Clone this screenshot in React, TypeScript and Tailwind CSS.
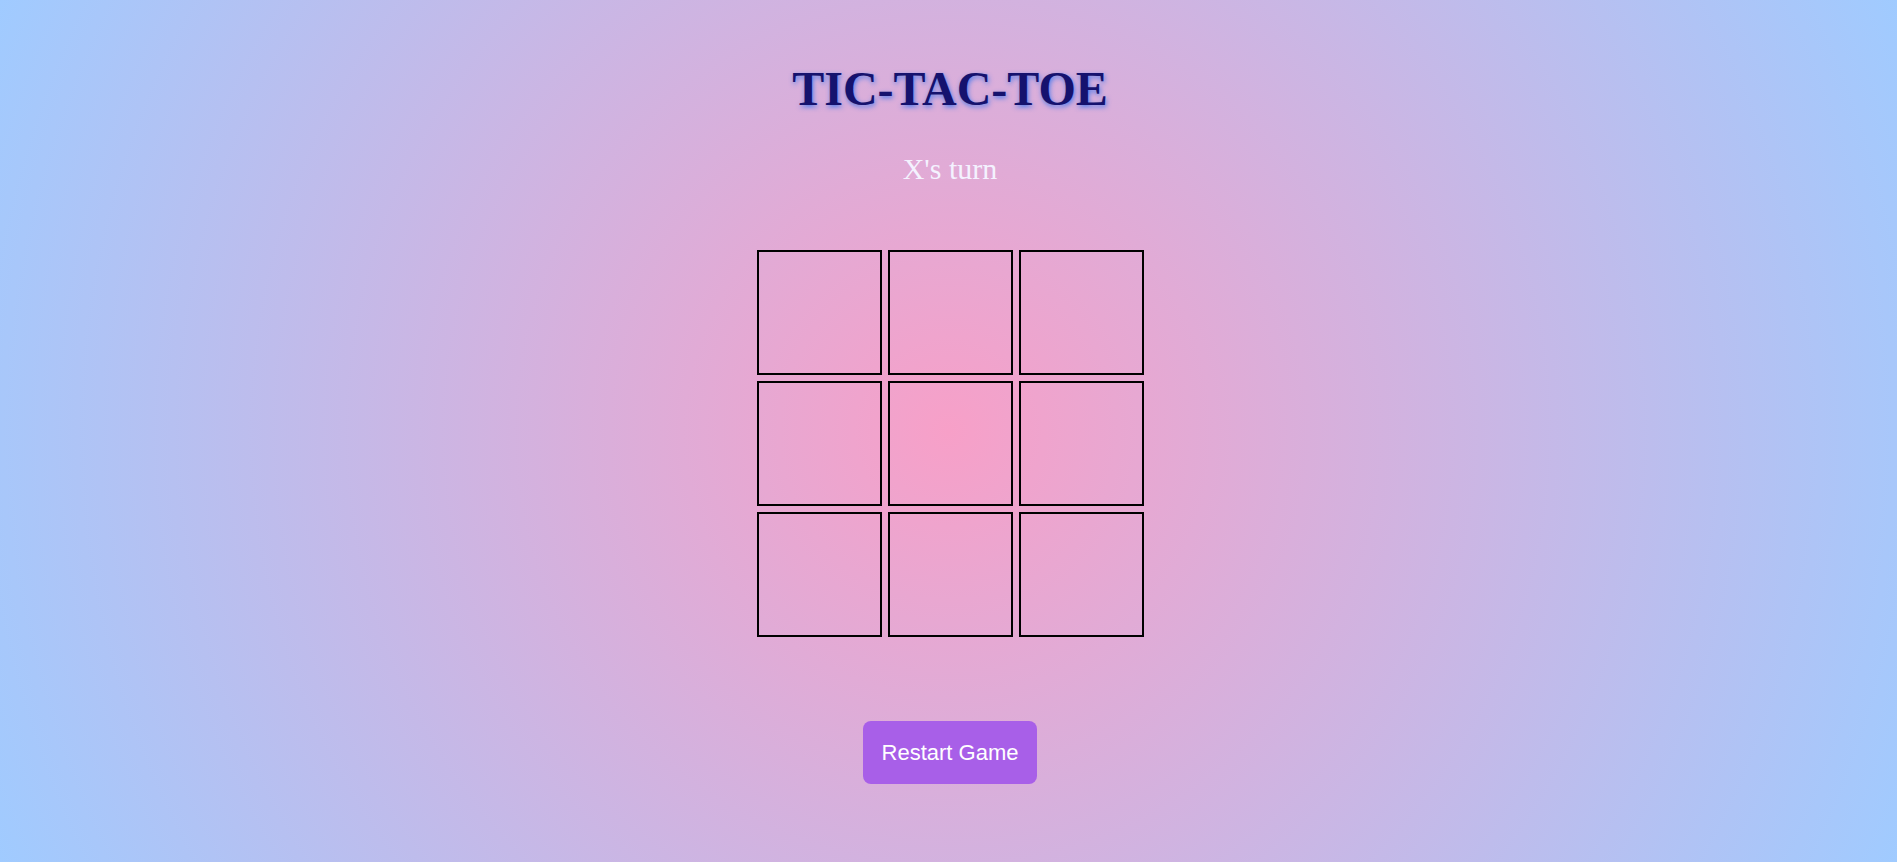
import React, { useState } from 'react';

type Cell = 'X' | 'O' | null;

const Square: React.FC<{ value: Cell; onClick: () => void }> = ({ value, onClick }) => (
  <button
    onClick={onClick}
    className="w-[125px] h-[125px] border-2 border-black bg-transparent flex items-center justify-center text-[64px] leading-none text-[#15126e] font-['Liberation_Serif',serif]"
  >
    {value}
  </button>
);

const App: React.FC = () => {
  const [board, setBoard] = useState<Cell[]>(Array(9).fill(null));
  const [xNext, setXNext] = useState(true);

  const play = (i: number) => {
    if (board[i]) return;
    const next = board.slice();
    next[i] = xNext ? 'X' : 'O';
    setBoard(next);
    setXNext(!xNext);
  };

  const restart = () => {
    setBoard(Array(9).fill(null));
    setXNext(true);
  };

  return (
    <div className="min-h-screen w-full bg-[radial-gradient(circle,#f7a0c8,#a0cbff)] font-['Liberation_Serif',serif]">
      <div className="flex flex-col items-center pt-[61px] pl-[3px]">
        <h1 className="text-[48px] leading-[55px] font-bold text-[#15126e] [text-shadow:1px_2px_5px_rgba(40,110,240,0.8)]">
          TIC-TAC-TOE
        </h1>
        <p className="mt-[36px] text-[30px] leading-[34px] text-[#f4f2ff]">{xNext ? "X's" : "O's"} turn</p>

        <div className="mt-[64px] grid grid-cols-3 gap-[6px]">
          {board.map((v, i) => (
            <Square key={i} value={v} onClick={() => play(i)} />
          ))}
        </div>

        <button
          onClick={restart}
          className="mt-[84px] w-[174px] h-[63px] rounded-lg bg-[#a85fe8] text-white text-[22px] font-['Liberation_Sans',Arial,sans-serif]"
        >
          Restart Game
        </button>
      </div>
    </div>
  );
};

export default App;
